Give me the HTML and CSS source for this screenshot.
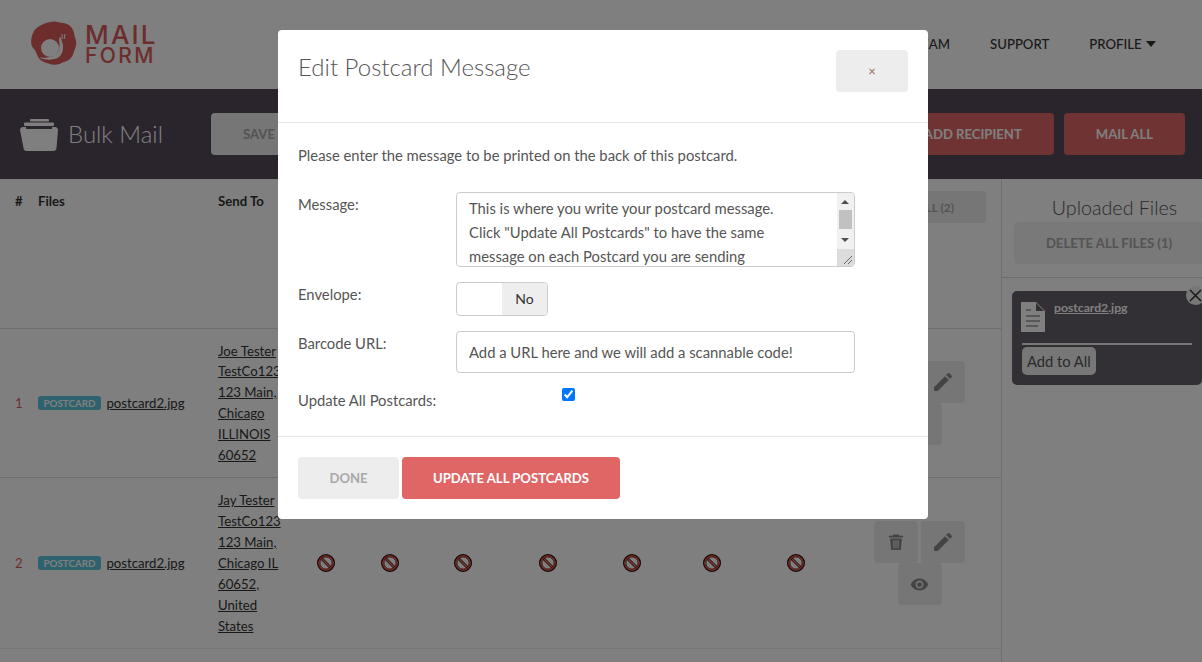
FILE: index.html
```html
<!DOCTYPE html>
<html>
<head>
<title>Bulk Mail</title>
<link rel="stylesheet" href="styles.css">
</head>
<body>
<div class="page">
  <header class="site-header">
    <a class="logo">
      <svg class="logo-mark" width="48" height="46" viewBox="0 0 48 46">
        <path class="blob" d="M20 1c5-1.500 9 .5 13 1 5 .5 8 3 10 7 1.500 3 1 6 2.500 9 1.500 4 .5 7-1 11-1 3-1.500 6-4.500 9-3 2.500-6 2.500-9.500 4.500-4 2-8 1.500-12 0-3.500-1-7-2-9.500-5-2-3-2.500-6-4.500-9C.5 25 1 21 1.500 17c1-4 1.500-6 4-9 3-3 5-3.500 8-5 2.500-1 4-1.500 6.500-2z"/>
        <circle class="shell" cx="20" cy="27" r="9"/>
        <path class="snail-body" d="M10 36.500c6 .8 11 0 15-2.500 3-2 4.500-5 4.500-9 0-3-.5-6-.2-8.500l1.400-.5c.5 3 1.800 5 2.200 8 .6 5-.5 9.500-4.500 12.500-4 2.500-12 3-18.400.5z"/>
        <path class="snail-horn" d="M32 13l.3 5M35 13l-.8 5"/>
      </svg>
      <span class="logo-text"><span class="logo-mail">MAIL</span><span class="logo-form">FORM</span></span>
    </a>
    <nav class="site-nav">
      <a>TEAM</a>
      <a>SUPPORT</a>
      <a>PROFILE <span class="caret"></span></a>
    </nav>
  </header>

  <div class="toolbar">
    <svg class="folder" width="38" height="32" viewBox="0 0 38 32">
      <rect x="10" y="0" width="19" height="2.500" rx="1"/>
      <rect x="4" y="3.500" width="30" height="3.500" rx="1"/>
      <path d="M3 8h3v2h26V8h3c2 0 3 1.500 3 3l-1.500 18c0 2-1.500 3-3 3h-27c-1.500 0-3-1-3-3L0 11c0-1.500 1-3 3-3z"/>
    </svg>
    <h1 class="toolbar-title">Bulk Mail</h1>
    <button class="btn btn-grey">SAVE ALL</button>
    <div class="toolbar-right">
      <button class="btn btn-red">ADD RECIPIENT</button>
      <button class="btn btn-red">MAIL ALL</button>
    </div>
  </div>

  <div class="content">
    <main class="mail-table">
      <div class="table-head">
        <span class="col-num">#</span>
        <span class="col-files">Files</span>
        <span class="col-send">Send To</span>
        <button class="btn btn-head">DELETE ALL (2)</button>
      </div>

      <div class="mail-row">
        <span class="row-num">1</span>
        <div class="file-cell"><span class="badge">POSTCARD</span> <a class="doc-link">postcard2.jpg</a></div>
        <a class="address">Joe Tester TestCo123 123 Main, Chicago ILLINOIS 60652</a>
        <span class="ban-cell"><svg class="ban" width="20" height="20" viewBox="0 0 20 20"><use href="#ban"/></svg></span>
        <span class="ban-cell"><svg class="ban" width="20" height="20" viewBox="0 0 20 20"><use href="#ban"/></svg></span>
        <span class="ban-cell"><svg class="ban" width="20" height="20" viewBox="0 0 20 20"><use href="#ban"/></svg></span>
        <span class="ban-cell"><svg class="ban" width="20" height="20" viewBox="0 0 20 20"><use href="#ban"/></svg></span>
        <span class="ban-cell"><svg class="ban" width="20" height="20" viewBox="0 0 20 20"><use href="#ban"/></svg></span>
        <span class="ban-cell"><svg class="ban" width="20" height="20" viewBox="0 0 20 20"><use href="#ban"/></svg></span>
        <span class="ban-cell"><svg class="ban" width="20" height="20" viewBox="0 0 20 20"><use href="#ban"/></svg></span>
        <div class="actions">
          <button class="icon-btn"><svg width="16" height="16" viewBox="0 0 18 18"><use href="#trash"/></svg></button>
          <button class="icon-btn"><svg width="24" height="24" viewBox="0 0 24 24"><use href="#pencil"/></svg></button>
          <button class="icon-btn"><svg width="19" height="19" viewBox="0 0 24 24"><use href="#eye"/></svg></button>
        </div>
      </div>

      <div class="mail-row">
        <span class="row-num">2</span>
        <div class="file-cell"><span class="badge">POSTCARD</span> <a class="doc-link">postcard2.jpg</a></div>
        <a class="address">Jay Tester TestCo123 123 Main, Chicago IL 60652, United States</a>
        <span class="ban-cell"><svg class="ban" width="20" height="20" viewBox="0 0 20 20"><use href="#ban"/></svg></span>
        <span class="ban-cell"><svg class="ban" width="20" height="20" viewBox="0 0 20 20"><use href="#ban"/></svg></span>
        <span class="ban-cell"><svg class="ban" width="20" height="20" viewBox="0 0 20 20"><use href="#ban"/></svg></span>
        <span class="ban-cell"><svg class="ban" width="20" height="20" viewBox="0 0 20 20"><use href="#ban"/></svg></span>
        <span class="ban-cell"><svg class="ban" width="20" height="20" viewBox="0 0 20 20"><use href="#ban"/></svg></span>
        <span class="ban-cell"><svg class="ban" width="20" height="20" viewBox="0 0 20 20"><use href="#ban"/></svg></span>
        <span class="ban-cell"><svg class="ban" width="20" height="20" viewBox="0 0 20 20"><use href="#ban"/></svg></span>
        <div class="actions">
          <button class="icon-btn"><svg width="16" height="16" viewBox="0 0 18 18"><use href="#trash"/></svg></button>
          <button class="icon-btn"><svg width="24" height="24" viewBox="0 0 24 24"><use href="#pencil"/></svg></button>
          <button class="icon-btn"><svg width="19" height="19" viewBox="0 0 24 24"><use href="#eye"/></svg></button>
        </div>
      </div>
    </main>

    <aside class="uploads">
      <h2 class="uploads-title">Uploaded Files</h2>
      <button class="btn btn-delete">DELETE ALL FILES (1)</button>
      <div class="uploads-list">
        <div class="file-card">
          <button class="file-close">
            <svg width="19" height="19" viewBox="0 0 19 19"><path d="M4 4l11 11M15 4L4 15"/></svg>
          </button>
          <div class="file-info">
            <svg class="file-icon" width="24" height="30" viewBox="0 0 24 30">
              <path class="sheet" d="M0 0h15l9 9v21H0z"/>
              <path class="fold" d="M15 1l8 8h-8z"/>
              <path class="lines" d="M5 8h5M5 14h14M5 19h14M5 24h12"/>
            </svg>
            <a class="file-name">postcard2.jpg</a>
          </div>
          <div class="file-rule"></div>
          <button class="add-all">Add to All</button>
        </div>
      </div>
    </aside>
  </div>
</div>

<div class="backdrop">
  <div class="modal">
    <div class="modal-header">
      <h3 class="modal-title">Edit Postcard Message</h3>
      <button class="modal-close">×</button>
    </div>
    <div class="modal-body">
      <p class="modal-intro">Please enter the message to be printed on the back of this postcard.</p>
      <div class="form-row">
        <label class="form-label">Message:</label>
        <div class="message-box">
          <div class="message-text">This is where you write your postcard message. Click "Update All Postcards" to have the same message on each Postcard you are sending</div>
          <div class="fake-scroll">
            <span class="arrow-up"></span>
            <span class="scroll-thumb"></span>
            <span class="arrow-down"></span>
            <span class="scroll-corner">
              <svg width="11" height="11" viewBox="0 0 11 11"><path d="M10 2L2 10M10 6L6 10"/></svg>
            </span>
          </div>
        </div>
      </div>
      <div class="form-row">
        <label class="form-label">Envelope:</label>
        <div class="toggle"><span class="toggle-off"></span><span class="toggle-no">No</span></div>
      </div>
      <div class="form-row">
        <label class="form-label">Barcode URL:</label>
        <input class="url-input" type="text" value="Add a URL here and we will add a scannable code!">
      </div>
      <div class="form-row form-row-check">
        <label class="form-label">Update All Postcards:</label>
        <input class="update-check" type="checkbox" checked>
      </div>
    </div>
    <div class="modal-footer">
      <button class="btn btn-done">DONE</button>
      <button class="btn btn-update">UPDATE ALL POSTCARDS</button>
    </div>
  </div>
</div>

<!-- shared icons -->
<svg class="icon-defs" width="0" height="0">
  <defs>
    <g id="ban">
      <path d="M4.500 4.500l11 11" stroke="#3a1a16" stroke-width="2.800"/>
      <path d="M4.500 4.500l11 11" stroke="#ff7a66" stroke-width="1.300"/>
      <circle cx="10" cy="10" r="8.300" fill="none" stroke="#1c0a0a" stroke-width="1.400"/>
      <circle cx="10" cy="10" r="7" fill="none" stroke="#f0402a" stroke-width="1.300"/>
      <circle cx="10" cy="10" r="6" fill="none" stroke="#3a1a16" stroke-width="0.700"/>
    </g>
    <path id="pencil" d="M3 17.250V21h3.750L17.810 9.940l-3.750-3.750L3 17.250zM20.710 7.040c.39-.39.39-1.020 0-1.410l-2.340-2.340c-.39-.39-1.020-.39-1.410 0l-1.830 1.830 3.750 3.750 1.830-1.830z"/>
    <path id="trash" d="M6 .5h6l1 1.500h4v2H1V2h4zM2.500 5h13l-.8 12c0 .6-.5 1-1 1H4.300c-.5 0-1-.4-1-1zM6 7v9h1.200V7zm2.400 0v9h1.200V7zm2.400 0v9H12V7z" fill-rule="evenodd"/>
    <path id="eye" d="M12 4.500C7 4.500 2.730 7.610 1 12c1.730 4.390 6 7.500 11 7.500s9.270-3.110 11-7.500c-1.730-4.390-6-7.500-11-7.500zM12 17c-2.760 0-5-2.240-5-5s2.240-5 5-5 5 2.240 5 5-2.240 5-5 5zm0-8c-1.660 0-3 1.340-3 3s1.340 3 3 3 3-1.340 3-3-1.340-3-3-3z"/>
  </defs>
</svg>
</body>
</html>
```

FILE: styles.css
```css
html, body {
  margin: 0;
  height: 100%;
  overflow: hidden;
}
body {
  font-family: "Lato", "Liberation Sans", sans-serif;
  font-size: 13.2px;
  line-height: 20.88px;
  color: #555;
  background-color: #fff;
}
button {
  font-family: inherit;
}
.icon-defs {
  position: absolute;
}

/* header */
.site-header {
  height: 89px;
  display: flex;
  align-items: center;
  justify-content: space-between;
  padding: 0 46px 0 30px;
  box-sizing: border-box;
}
.logo {
  display: flex;
  align-items: center;
  gap: 7px;
  margin-top: -1px;
}
.logo-mark .blob {
  fill: #d85a58;
}
.logo-mark .shell, .logo-mark .snail-body {
  fill: #fff;
}
.logo-mark .snail-horn {
  fill: none;
  stroke: #fff;
  stroke-width: 1;
}
.logo-text {
  display: flex;
  flex-direction: column;
  font-family: "Inter", sans-serif;
  font-weight: 500;
  color: #d85a58;
}
.logo-mail {
  font-size: 26px;
  line-height: 22px;
  letter-spacing: 2.2px;
}
.logo-form {
  font-size: 21px;
  line-height: 19px;
  letter-spacing: 2.4px;
}
.site-nav {
  display: flex;
  gap: 40px;
  font-size: 13.2px;
  font-weight: 500;
  color: #333;
}
.caret {
  display: inline-block;
  width: 0;
  height: 0;
  margin-left: 1px;
  vertical-align: 2px;
  border-left: 5px solid transparent;
  border-right: 5px solid transparent;
  border-top: 6px solid #333;
}

/* toolbar */
.toolbar {
  height: 90px;
  display: flex;
  align-items: center;
  padding: 0 17px 0 20px;
  box-sizing: border-box;
  background-color: #54485a;
}
.folder {
  fill: #fff;
  margin-top: 2px;
}
.toolbar-title {
  margin: 0 48px 0 10px;
  font-size: 24px;
  font-weight: 300;
  color: #fff;
}
.toolbar-right {
  margin-left: auto;
  display: flex;
  gap: 10px;
}
.btn {
  height: 42px;
  padding: 0 32px;
  border: none;
  border-radius: 4px;
  font-size: 13.1px;
  font-weight: 700;
}
.btn-grey {
  background-color: #ededed;
  color: #a8a8a8;
}
.btn-red {
  background-color: #e06666;
  color: #fff;
}

/* table */
.content {
  display: flex;
  height: 483px;
}
.mail-table {
  width: 1001px;
  flex: none;
}
.table-head {
  height: 150px;
  padding: 12px 15px 0;
  box-sizing: border-box;
  display: flex;
  align-items: flex-start;
  border-bottom: 1px solid #dcdcdc;
  font-weight: 700;
  color: #333;
}
.col-num {
  width: 23px;
}
.col-files {
  width: 180px;
}
.btn-head {
  height: 32px;
  margin-left: auto;
  font-size: 12px;
  background-color: #ededed;
  color: #a8a8a8;
}
.mail-row {
  display: grid;
  grid-template-columns: 23px 180px 76px 64px 64px 82px 88px 80px 80px 88px 1fr;
  align-items: center;
  padding-left: 15px;
  border-bottom: 1px solid #dcdcdc;
}
.mail-row:last-child {
  border-bottom-color: #eee;
}
.row-num {
  color: #d8605c;
}
.badge {
  display: inline-block;
  width: 63px;
  height: 14px;
  margin-right: 2px;
  border-radius: 3px;
  background-color: #5cc4dc;
  color: #fff;
  font-size: 9.8px;
  font-weight: 700;
  line-height: 14px;
  text-align: center;
  vertical-align: 1px;
}
.doc-link, .address {
  color: #333;
  text-decoration: underline;
}
.address {
  padding: 11.5px 0;
}
.mail-row:last-child .address {
  padding: 12px 0;
}
.ban-cell {
  display: flex;
  justify-content: center;
}
.actions {
  width: 91px;
  margin-left: 34px;
  display: flex;
  flex-wrap: wrap;
  justify-content: center;
  column-gap: 3px;
}
.icon-btn {
  width: 44px;
  height: 42px;
  padding: 0;
  display: flex;
  align-items: center;
  justify-content: center;
  border: none;
  border-radius: 4px;
  background-color: #ececec;
  fill: #888;
}

/* uploaded files */
.uploads {
  width: 201px;
  flex: none;
  box-sizing: border-box;
  border-left: 1px solid #dcdcdc;
  overflow: hidden;
}
.uploads-title {
  margin: 14px 0 0;
  padding-left: 25px;
  font-size: 19.7px;
  font-weight: 300;
  line-height: 30px;
  text-align: center;
  color: #555;
}
.btn-delete {
  display: block;
  width: 190px;
  margin: -1px 0 0 12px;
  padding: 0;
  background-color: #f2f2f2;
  color: #a8a8a8;
  white-space: nowrap;
}
.uploads-list {
  margin-top: 13px;
  padding: 13px 0 0 10px;
  border-top: 1px solid #dcdcdc;
}
.file-card {
  position: relative;
  width: 190px;
  height: 94px;
  padding: 11px 10px 0;
  box-sizing: border-box;
  border-radius: 5px;
  background-color: #67606a;
}
.file-close {
  position: absolute;
  top: -5px;
  right: -3px;
  width: 19px;
  height: 19px;
  padding: 0;
  border: none;
  border-radius: 50%;
  background-color: #eee;
}
.file-close svg {
  display: block;
  fill: none;
  stroke: #333;
  stroke-width: 1.500;
}
.file-info {
  display: flex;
  gap: 9px;
  height: 41px;
  margin-left: -1px;
}
.file-icon .sheet {
  fill: #fff;
}
.file-icon .fold {
  fill: #67606a;
}
.file-icon .lines {
  fill: none;
  stroke: #67606a;
  stroke-width: 1.200;
}
.file-name {
  font-size: 12.2px;
  font-weight: 700;
  line-height: 11px;
  color: #fff;
  text-decoration: underline;
}
.file-rule {
  width: 170px;
  height: 2px;
  background-color: #fff;
  opacity: 0.9;
}
.add-all {
  height: 28px;
  margin-top: 2px;
  padding: 0 5px;
  border: none;
  border-radius: 5px;
  background-color: #eee;
  color: #555;
  font-size: 14.7px;
}

/* modal */
.backdrop {
  position: fixed;
  top: 0;
  left: 0;
  right: 0;
  bottom: 0;
  padding: 30px 0 0 278px;
  background-color: rgba(0, 0, 0, 0.5);
}
.modal {
  width: 650px;
  height: 489px;
  border-radius: 4px;
  background-color: #fff;
  font-size: 14.8px;
}
.modal-header {
  height: 93px;
  padding: 20px;
  box-sizing: border-box;
  display: flex;
  justify-content: space-between;
  align-items: flex-start;
  border-bottom: 1px solid #e6e6e6;
}
.modal-title {
  margin: 0;
  font-size: 24px;
  font-weight: 300;
  line-height: 33px;
  color: #555;
}
.modal-close {
  width: 72px;
  height: 42px;
  padding: 0;
  border: none;
  border-radius: 4px;
  background-color: #ededed;
  color: #9a6a60;
  font-size: 13px;
}
.modal-body {
  height: 313px;
  padding: 22px 20px 0;
  box-sizing: border-box;
}
.modal-intro {
  margin: 0 0 26px;
  line-height: 21px;
  color: #555;
}
.form-row {
  display: flex;
  align-items: flex-start;
  margin-bottom: 15px;
}
.form-label {
  width: 158px;
  flex: none;
  padding-top: 2px;
  line-height: 21px;
  color: #555;
}
.message-box {
  width: 399px;
  height: 75px;
  box-sizing: border-box;
  display: flex;
  border: 1px solid #ccc;
  border-radius: 4px;
  overflow: hidden;
}
.message-text {
  flex: 1;
  padding: 3px 38px 0 12px;
  line-height: 24px;
  color: #555;
}
.fake-scroll {
  position: relative;
  width: 17px;
  flex: none;
  background-color: #f1f1f1;
}
.arrow-up, .arrow-down {
  position: absolute;
  left: 4px;
  width: 0;
  height: 0;
  border-left: 4px solid transparent;
  border-right: 4px solid transparent;
}
.arrow-up {
  top: 7px;
  border-bottom: 4px solid #505050;
}
.arrow-down {
  top: 45px;
  border-top: 4px solid #505050;
}
.scroll-thumb {
  position: absolute;
  top: 17px;
  left: 2px;
  width: 13px;
  height: 19px;
  background-color: #c1c1c1;
}
.scroll-corner {
  position: absolute;
  top: 56px;
  left: 0;
  right: 0;
  bottom: 0;
  background-color: #dcdcdc;
}
.scroll-corner svg {
  position: absolute;
  right: 1px;
  bottom: 1px;
  fill: none;
  stroke: #666;
}
.toggle {
  width: 92px;
  height: 34px;
  box-sizing: border-box;
  display: flex;
  border: 1px solid #ccc;
  border-radius: 4px;
  overflow: hidden;
}
.toggle-off {
  width: 45px;
}
.toggle-no {
  flex: 1;
  background-color: #eee;
  color: #333;
  font-size: 14px;
  line-height: 32px;
  text-align: center;
}
.url-input {
  width: 399px;
  height: 42px;
  padding: 0 12px;
  box-sizing: border-box;
  border: 1px solid #ccc;
  border-radius: 4px;
  font-family: inherit;
  font-size: 14.8px;
  color: #555;
}
.form-row-check {
  margin-bottom: 0;
}
.update-check {
  width: 13px;
  height: 13px;
  margin: 0 0 0 106px;
}
.modal-footer {
  height: 83px;
  padding: 20px 20px 0;
  box-sizing: border-box;
  display: flex;
  gap: 3px;
  border-top: 1px solid #e6e6e6;
}
.btn-done {
  width: 101px;
  padding: 0;
  background-color: #ededed;
  color: #a8a8a8;
}
.btn-update {
  width: 218px;
  padding: 0;
  background-color: #e06666;
  color: #fff;
}
```
